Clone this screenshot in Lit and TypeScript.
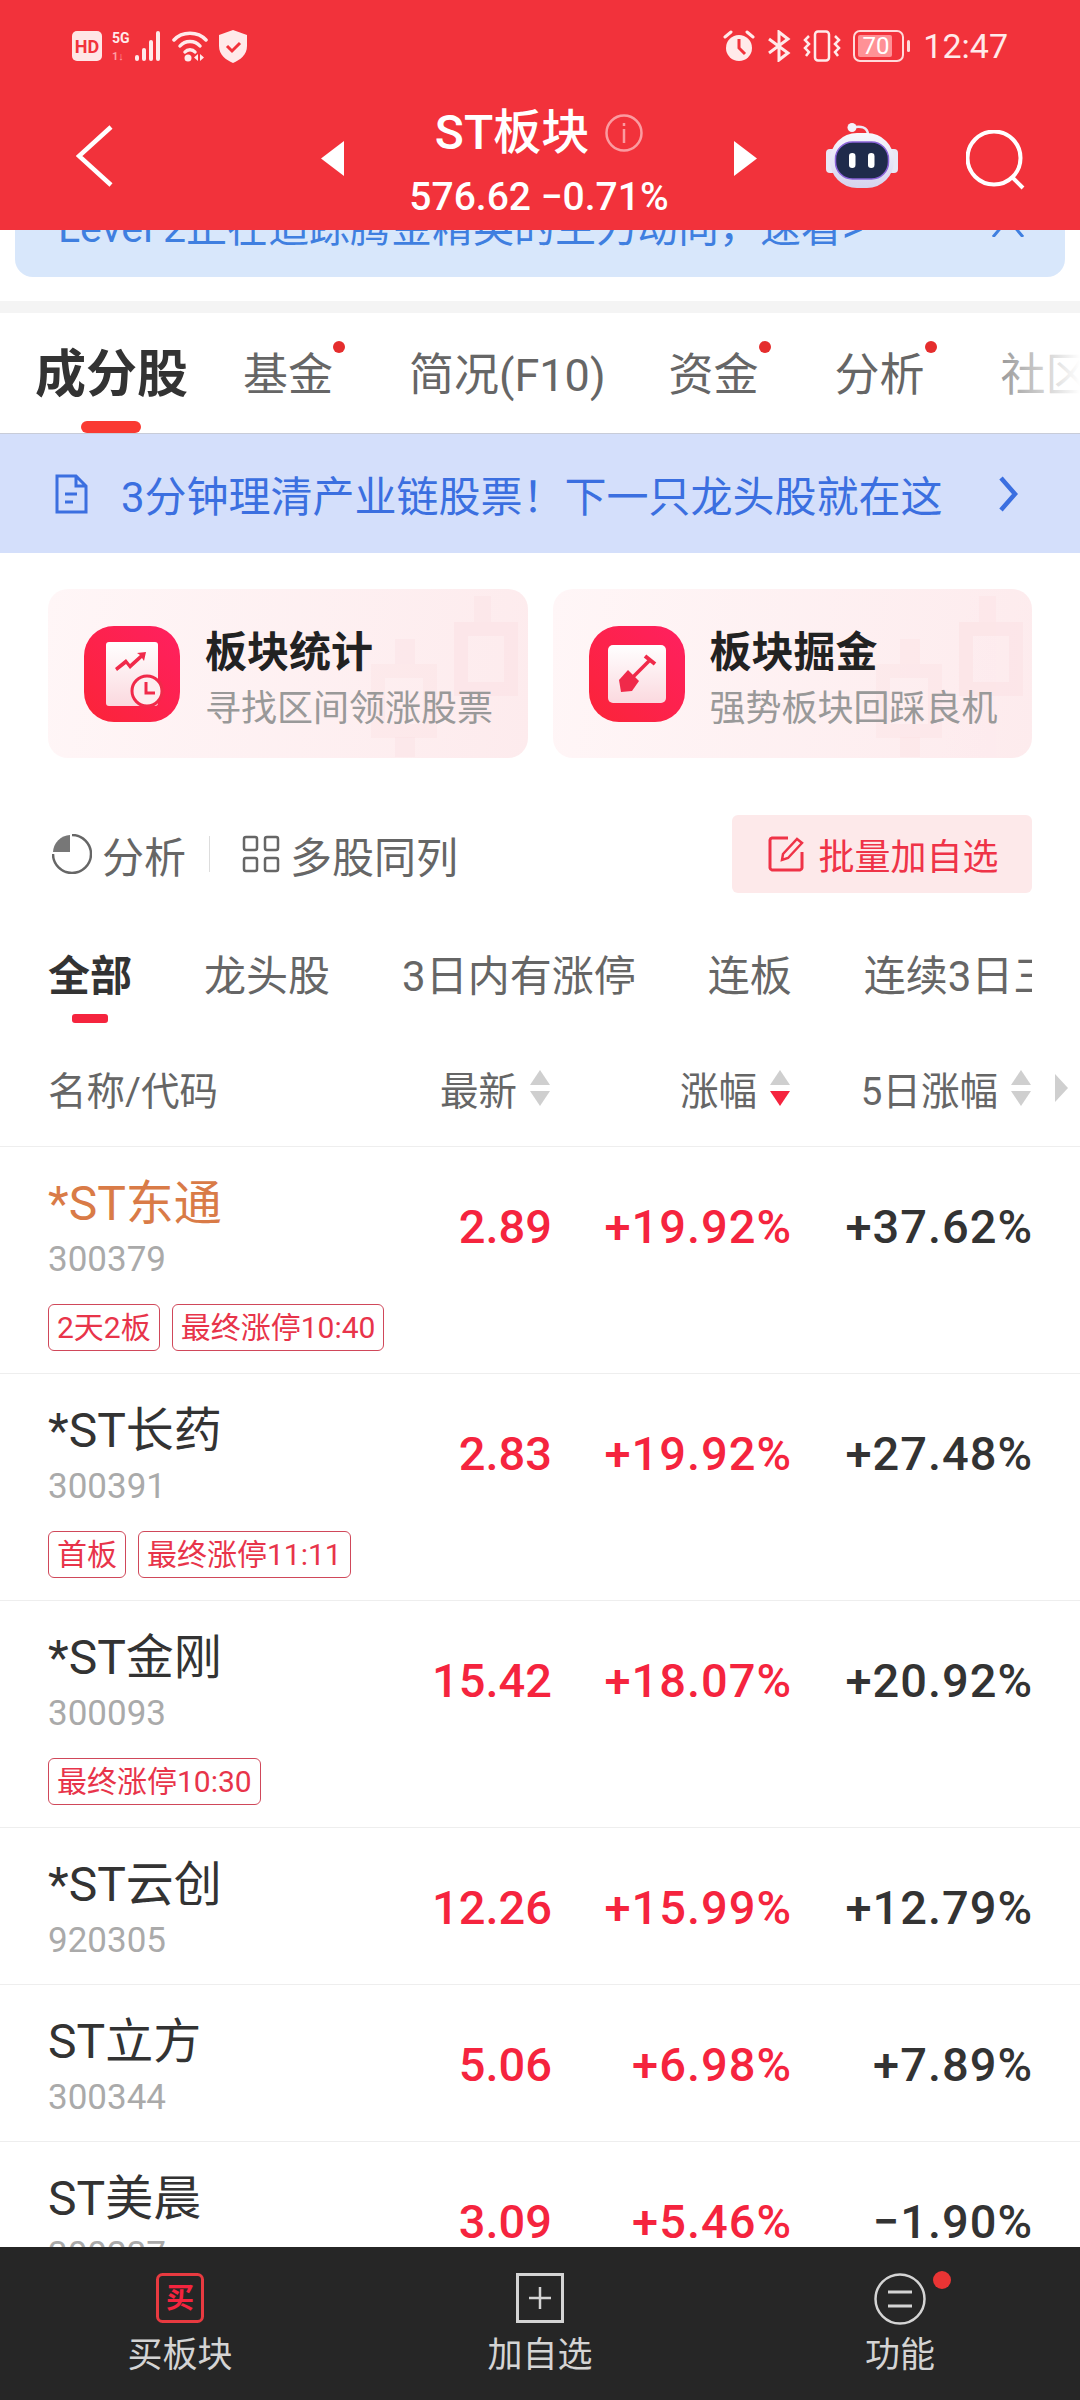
import { LitElement, css, html, svg } from "lit";
import { customElement } from "lit/decorators.js";
import { classMap } from "lit/directives/class-map.js";

interface Stock {
  name: string;
  code: string;
  last: string;
  pct: string;
  five: string;
  tags: string[];
  hot?: boolean;
}

const STOCKS: Stock[] = [
  { name: "*ST东通", code: "300379", last: "2.89", pct: "+19.92%", five: "+37.62%", tags: ["2天2板", "最终涨停10:40"], hot: true },
  { name: "*ST长药", code: "300391", last: "2.83", pct: "+19.92%", five: "+27.48%", tags: ["首板", "最终涨停11:11"] },
  { name: "*ST金刚", code: "300093", last: "15.42", pct: "+18.07%", five: "+20.92%", tags: ["最终涨停10:30"] },
  { name: "*ST云创", code: "920305", last: "12.26", pct: "+15.99%", five: "+12.79%", tags: [] },
  { name: "ST立方", code: "300344", last: "5.06", pct: "+6.98%", five: "+7.89%", tags: [] },
  { name: "ST美晨", code: "300237", last: "3.09", pct: "+5.46%", five: "−1.90%", tags: [] },
];

const sortArrows = (active = false) => html`
  <svg class="sort" width="22" height="36" viewBox="0 0 22 36">
    <path d="M11 0 L21 15 H1 Z" fill="#cfcfcf"></path>
    <path d="M1 21 H21 L11 36 Z" fill=${active ? "#f5243e" : "#cfcfcf"}></path>
  </svg>
`;

// 卡片背景里的淡色K线
const candles = svg`
  <g fill="none" stroke="#fbdfe3" opacity=".45">
    <rect x="413" y="40" width="50" height="60" stroke-width="14"></rect>
    <rect x="330" y="82" width="52" height="60" stroke-width="14" opacity=".7"></rect>
  </g>
  <g fill="#fbdfe3" opacity=".35">
    <rect x="426" y="7" width="17" height="26"></rect>
    <rect x="347" y="50" width="20" height="25"></rect>
    <rect x="347" y="148" width="20" height="20"></rect>
  </g>
`;

@customElement("app-root")
export class AppRoot extends LitElement {
  static styles = css`
    :host {
      display: flex;
      flex-direction: column;
      width: 1080px;
      height: 2400px;
      overflow: hidden;
      background: #fff;
      font-family: Roboto, "Noto Sans CJK SC", sans-serif;
      color: #333;
    }
    svg {
      display: block;
      flex: none;
    }

    /* 顶部红色区域 */
    .top {
      position: relative;
      height: 230px;
      flex: none;
      background: #f2323b;
      color: #fff;
    }
    .status {
      height: 92px;
      display: flex;
      align-items: center;
      padding: 0 72px;
      color: #ffeaea;
    }
    .status-left {
      display: flex;
      align-items: center;
      gap: 10px;
    }
    .status-right {
      display: flex;
      align-items: center;
      gap: 12px;
      margin-left: auto;
    }
    .time {
      font-size: 34px;
      line-height: 40px;
    }
    .nav {
      display: flex;
      align-items: flex-start;
      height: 138px;
    }
    .back {
      margin: 33px 0 0 76px;
    }
    .tri-left {
      margin: 49px 0 0 207px;
    }
    .tri-right {
      margin-top: 49px;
    }
    .robot {
      margin: 31px 0 0 69px;
    }
    .search {
      margin: 38px 0 0 68px;
    }
    .center {
      width: 390px;
      padding-top: 16px;
      display: flex;
      flex-direction: column;
      align-items: center;
    }
    .title-row {
      display: flex;
      align-items: center;
      gap: 16px;
      height: 50px;
    }
    .title {
      font-size: 48px;
      line-height: 50px;
      font-weight: 500;
    }
    .sub {
      font-size: 39px;
      line-height: 44px;
      font-weight: 500;
      margin-top: 17px;
      white-space: nowrap;
    }

    /* 被遮住一半的提示条 */
    .notice {
      height: 47px;
      flex: none;
      margin: 0 15px;
      padding: 0 40px 0 43px;
      box-sizing: border-box;
      display: flex;
      justify-content: space-between;
      background: #d8e7fb;
      border-radius: 0 0 18px 18px;
      overflow: hidden;
      color: #3f7fe0;
      font-size: 41px;
    }
    .notice-text {
      line-height: 50px;
      margin-top: -27px;
      white-space: nowrap;
    }
    .notice-x {
      margin-top: -17px;
    }
    .gap-band {
      height: 12px;
      flex: none;
      margin-top: 24px;
      background: #f4f4f4;
    }

    /* 一级标签 */
    .tabs {
      position: relative;
      height: 120px;
      flex: none;
      display: flex;
      align-items: flex-start;
      padding-left: 35px;
      overflow: hidden;
      white-space: nowrap;
    }
    .tab {
      position: relative;
      flex: none;
      margin-top: 37px;
      margin-right: 76px;
      font-size: 45px;
      line-height: 52px;
      color: #666;
    }
    .tab:nth-child(3) {
      margin-right: 63px;
    }
    .tab.on {
      margin-top: 32px;
      margin-right: 55px;
      font-size: 51px;
      line-height: 60px;
      font-weight: 700;
      color: #333;
    }
    .tab.on::after {
      content: "";
      position: absolute;
      left: 46px;
      top: 76px;
      width: 60px;
      height: 12px;
      border-radius: 6px;
      background: #fa3a32;
    }
    .dot {
      position: absolute;
      right: -12px;
      top: -9px;
      width: 12px;
      height: 12px;
      border-radius: 50%;
      background: #e52d2d;
    }
    .tabs-fade {
      position: absolute;
      right: 0;
      top: 0;
      bottom: 0;
      width: 90px;
      background: linear-gradient(to right, rgba(255, 255, 255, 0.25), #fff);
    }

    /* 蓝色横幅 */
    .banner {
      height: 120px;
      flex: none;
      display: flex;
      align-items: center;
      padding: 0 62px 0 55px;
      box-sizing: border-box;
      background: #d4dffb;
      border-top: 1px solid #c8ccd8;
      color: #3b6fe0;
      font-size: 42px;
      white-space: nowrap;
    }
    .banner-text {
      margin-left: 33px;
    }
    .banner svg:last-child {
      margin-left: auto;
    }

    /* 两张卡片 */
    .cards {
      flex: none;
      display: flex;
      gap: 25px;
      padding: 36px 48px 0;
    }
    .card {
      position: relative;
      flex: 1;
      height: 169px;
      display: flex;
      align-items: center;
      gap: 25px;
      padding-left: 36px;
      border-radius: 20px;
      overflow: hidden;
      background: linear-gradient(100deg, #fff6f7, #fdebed);
    }
    .card-bg {
      position: absolute;
      left: 0;
      top: 0;
    }
    .card-icon {
      position: relative;
    }
    .card-text {
      position: relative;
      padding-top: 12px;
    }
    .card-title {
      font-size: 42px;
      line-height: 52px;
      font-weight: 700;
      color: #222;
    }
    .card-sub {
      font-size: 36px;
      line-height: 48px;
      margin-top: 6px;
      color: #999;
      white-space: nowrap;
    }

    /* 工具行 */
    .tools {
      flex: none;
      display: flex;
      align-items: center;
      height: 78px;
      margin-top: 57px;
      padding: 0 48px 0 52px;
      font-size: 42px;
      color: #666;
    }
    .tools-label {
      margin-left: 10px;
    }
    .tools-sep {
      width: 1px;
      height: 36px;
      margin: 0 32px 0 23px;
      background: #ddd;
    }
    .batch {
      margin-left: auto;
      width: 300px;
      height: 78px;
      box-sizing: border-box;
      padding-left: 3px;
      display: flex;
      align-items: center;
      justify-content: center;
      gap: 14px;
      border-radius: 6px;
      background: #fde9ea;
      color: #ef3347;
      font-size: 36px;
    }

    /* 二级标签 */
    .subtabs {
      position: relative;
      flex: none;
      display: flex;
      gap: 72px;
      height: 82px;
      margin: 54px 48px 0;
      overflow: hidden;
      white-space: nowrap;
      font-size: 42px;
      line-height: 60px;
      color: #666;
    }
    .subtab {
      flex: none;
      position: relative;
      height: 82px;
    }
    .subtab.on {
      font-weight: 700;
      color: #333;
    }
    .subtab.on::after {
      content: "";
      position: absolute;
      left: 24px;
      top: 67px;
      width: 36px;
      height: 9px;
      border-radius: 3px;
      background: #f5243e;
    }

    /* 行情列表 */
    .list-head,
    .row-main {
      display: grid;
      grid-template-columns: 282px 221px 240px 241px;
    }
    .list-head {
      position: relative;
      flex: none;
      height: 117px;
      padding: 0 48px;
      align-items: center;
      border-bottom: 1px solid #eee;
      font-size: 38.5px;
      color: #666;
    }
    .head-cell {
      display: flex;
      align-items: center;
      justify-content: flex-end;
      gap: 12px;
      white-space: nowrap;
    }
    .head-cell.first {
      justify-content: flex-start;
    }
    .more {
      position: absolute;
      right: 12px;
      top: 45px;
    }
    .list {
      flex: 1;
      min-height: 0;
      overflow: hidden;
    }
    .row {
      padding: 0 48px;
      border-bottom: 1px solid #eee;
    }
    .name-cell {
      padding-top: 27px;
    }
    .name {
      font-size: 48px;
      line-height: 60px;
      color: #333;
      white-space: nowrap;
    }
    .name.hot {
      color: #d97b47;
    }
    .code {
      font-size: 35px;
      line-height: 44px;
      margin-top: 4px;
      color: #aaa;
    }
    .num {
      margin-top: 50px;
      margin-right: -1px;
      text-align: right;
      font-size: 47px;
      line-height: 60px;
      font-weight: 500;
      color: #f5243e;
      white-space: nowrap;
    }
    .num.pct {
      letter-spacing: 1px;
    }
    .num.plain {
      color: #333;
    }
    .row-tags {
      display: flex;
      gap: 12px;
      padding: 0 0 22px;
      margin-top: 22px;
    }
    .row-main {
      padding-bottom: 21px;
    }
    .row.has-tags .row-main {
      padding-bottom: 0;
    }
    .tag {
      height: 45px;
      line-height: 45px;
      padding: 0 8px;
      border: 1px solid #d0485a;
      border-radius: 6px;
      font-size: 30px;
      color: #e8344a;
      white-space: nowrap;
    }

    /* 底部操作栏 */
    .bottom {
      flex: none;
      height: 153px;
      display: grid;
      grid-template-columns: repeat(3, 360px);
      background: #262626;
      color: #d4d4d4;
      font-size: 35px;
    }
    .action {
      position: relative;
      display: flex;
      flex-direction: column;
      align-items: center;
      padding-top: 26px;
    }
    .action-label {
      line-height: 46px;
      margin-top: 10px;
    }
    .action:last-child .action-label {
      margin-top: 8px;
    }
    .action-dot {
      position: absolute;
      left: 213px;
      top: 24px;
      width: 18px;
      height: 18px;
      border-radius: 50%;
      background: #e93434;
    }
  `;

  private statusLeft() {
    return html`
      <div class="status-left">
        <svg width="30" height="30" viewBox="0 0 30 30">
          <rect width="30" height="30" rx="5" fill="#ffe6e6"></rect>
          <text x="15" y="22" text-anchor="middle" font-size="18" font-weight="700" font-family="Roboto" fill="#f2323b">HD</text>
        </svg>
        <svg width="50" height="32" viewBox="0 0 50 32">
          <text x="0" y="13" font-size="14" font-weight="700" font-family="Roboto" fill="#ffeaea">5G</text>
          <text x="0" y="30" font-size="11" font-weight="700" font-family="Roboto" fill="#ff9ea3">1↓</text>
          <g fill="#ffeaea">
            <rect x="23" y="25" width="4" height="6" rx="2"></rect>
            <rect x="30" y="18" width="4" height="13" rx="2"></rect>
            <rect x="37" y="10" width="4" height="21" rx="2"></rect>
            <rect x="44" y="1" width="4" height="30" rx="2"></rect>
          </g>
        </svg>
        <svg width="36" height="32" viewBox="0 0 36 32">
          <g fill="none" stroke="#ffeaea" stroke-width="3.5" stroke-linecap="round">
            <path d="M2 10 C10 1 26 1 34 10"></path>
            <path d="M8 16 C13 10 23 10 28 16"></path>
            <path d="M13 22 C15.500 19 20.500 19 23 22"></path>
          </g>
          <circle cx="16" cy="28" r="3.500" fill="#ffeaea"></circle>
          <path d="M26 24 V31 L22 27.500 Z M28 24 V31 L32 27.500 Z" fill="#ffeaea"></path>
        </svg>
        <svg width="30" height="33" viewBox="0 0 30 33">
          <path d="M15 0 L29 5 V16 C29 25 22 30 15 33 C8 30 1 25 1 16 V5 Z" fill="#ffeaea"></path>
          <path d="M9 16 L14 21 L22 13" fill="none" stroke="#f2323b" stroke-width="3"></path>
        </svg>
      </div>
    `;
  }

  private statusRight() {
    return html`
      <div class="status-right">
        <svg width="32" height="32" viewBox="0 0 32 32">
          <circle cx="16" cy="18" r="13" fill="#ffeaea"></circle>
          <path d="M16 9 V18 L22 24" fill="none" stroke="#f2323b" stroke-width="3"></path>
          <path d="M2 7 L8 2 M30 7 L24 2" stroke="#ffeaea" stroke-width="3" stroke-linecap="round"></path>
        </svg>
        <svg width="24" height="32" viewBox="0 0 24 32">
          <path d="M2 9 L21 23 L12 30 V2 L21 9 L2 23" fill="none" stroke="#ffeaea" stroke-width="3"></path>
        </svg>
        <svg width="38" height="32" viewBox="0 0 38 32">
          <rect x="12" y="1.500" width="14" height="29" rx="3" fill="none" stroke="#ffeaea" stroke-width="2.500"></rect>
          <path d="M6 6 L2 10 L6 14 L2 18 L6 22 L3 26 M32 6 L36 10 L32 14 L36 18 L32 22 L35 26" fill="none" stroke="#ffeaea" stroke-width="2.500"></path>
        </svg>
        <svg width="58" height="32" viewBox="0 0 58 32">
          <rect x="1" y="1" width="49" height="30" rx="6" fill="none" stroke="#ffdada" stroke-width="2"></rect>
          <rect x="5" y="5" width="34" height="22" rx="2" fill="#ff9196"></rect>
          <rect x="54" y="10" width="3" height="12" rx="1.500" fill="#ffdada"></rect>
          <text x="23" y="24" text-anchor="middle" font-size="24" font-family="Roboto" fill="#fff">70</text>
        </svg>
        <span class="time">12:47</span>
      </div>
    `;
  }

  private robot() {
    return html`
      <svg class="robot" width="72" height="65" viewBox="0 0 72 65">
        <defs>
          <linearGradient id="shell" x1="0" y1="0" x2="0" y2="1">
            <stop offset="0" stop-color="#f8f8fd"></stop>
            <stop offset="1" stop-color="#d5d3ee"></stop>
          </linearGradient>
        </defs>
        <path d="M26 5 C34 2 42 4 42 12" fill="none" stroke="#ece9f6" stroke-width="2.500"></path>
        <circle cx="26" cy="4.500" r="4.500" fill="#f4f2fb"></circle>
        <rect x="0" y="26" width="10" height="24" rx="4" fill="#e9e7f5"></rect>
        <rect x="62" y="26" width="10" height="24" rx="4" fill="#e9e7f5"></rect>
        <rect x="4" y="10" width="64" height="55" rx="27" fill="url(#shell)"></rect>
        <rect x="9.500" y="19" width="53" height="37" rx="17" fill="#1f2b4b" stroke="#8a63d8" stroke-width="1.500"></rect>
        <rect x="23" y="30" width="6.500" height="15" rx="3.200" fill="#fff"></rect>
        <rect x="42" y="30" width="6.500" height="15" rx="3.200" fill="#fff"></rect>
      </svg>
    `;
  }

  private statIcon() {
    return html`
      <svg class="card-icon" width="96" height="96" viewBox="0 0 96 96">
        <defs>
          <linearGradient id="redA" x1="1" y1="0" x2="0" y2="1">
            <stop offset="0" stop-color="#ff2060"></stop>
            <stop offset="1" stop-color="#fb2438"></stop>
          </linearGradient>
          <linearGradient id="paperA" x1="0" y1="0" x2="0" y2="1">
            <stop offset="0" stop-color="#ffffff"></stop>
            <stop offset="1" stop-color="#fbd9df"></stop>
          </linearGradient>
        </defs>
        <rect width="96" height="96" rx="30" fill="url(#redA)"></rect>
        <rect x="22" y="16" width="52" height="64" rx="3" fill="url(#paperA)"></rect>
        <path d="M31 42 L42 33 L46 38 L56 29 L53 27 L62 26 L60 35 L58 32 L46 43 L42 38 L33 45 Z" fill="#f02a4a"></path>
        <circle cx="63" cy="65" r="15" fill="#fdeef0" stroke="#f02a4a" stroke-width="3"></circle>
        <path d="M62 56 V67 H71" fill="none" stroke="#f02a4a" stroke-width="3"></path>
      </svg>
    `;
  }

  private shovelIcon() {
    return html`
      <svg class="card-icon" width="96" height="96" viewBox="0 0 96 96">
        <defs>
          <linearGradient id="redB" x1="1" y1="0" x2="0" y2="1">
            <stop offset="0" stop-color="#ff2060"></stop>
            <stop offset="1" stop-color="#fb2438"></stop>
          </linearGradient>
          <linearGradient id="paperB" x1="0" y1="0" x2="0" y2="1">
            <stop offset="0" stop-color="#ffffff"></stop>
            <stop offset="1" stop-color="#fbd9df"></stop>
          </linearGradient>
        </defs>
        <rect width="96" height="96" rx="30" fill="url(#redB)"></rect>
        <rect x="19" y="19" width="58" height="58" rx="5" fill="url(#paperB)"></rect>
        <path d="M56 30 L66 38" fill="none" stroke="#f02a4a" stroke-width="4"></path>
        <path d="M60 35 L43 52" fill="none" stroke="#f02a4a" stroke-width="3.500"></path>
        <path d="M39 44 L50 55 L43 65 L32 66 L30 54 Z" fill="#f02a4a"></path>
      </svg>
    `;
  }

  private row(stock: Stock) {
    const tagged = stock.tags.length > 0;
    return html`
      <div class=${classMap({ row: true, "has-tags": tagged })}>
        <div class="row-main">
          <div class="name-cell">
            <div class=${classMap({ name: true, hot: !!stock.hot })}>${stock.name}</div>
            <div class="code">${stock.code}</div>
          </div>
          <div class="num">${stock.last}</div>
          <div class="num pct">${stock.pct}</div>
          <div class="num pct plain">${stock.five}</div>
        </div>
        ${tagged
          ? html`<div class="row-tags">${stock.tags.map((t) => html`<span class="tag">${t}</span>`)}</div>`
          : null}
      </div>
    `;
  }

  render() {
    return html`
      <header class="top">
        <div class="status">${this.statusLeft()}${this.statusRight()}</div>
        <div class="nav">
          <svg class="back" width="38" height="62" viewBox="0 0 38 62">
            <path d="M35 2 L3 31 L35 60" fill="none" stroke="#fff" stroke-width="4.500"></path>
          </svg>
          <svg class="tri-left" width="23" height="35" viewBox="0 0 23 35"><path d="M23 0 V35 L0 17.500 Z" fill="#fff"></path></svg>
          <div class="center">
            <div class="title-row">
              <span class="title">ST板块</span>
              <svg width="38" height="38" viewBox="0 0 38 38">
                <circle cx="19" cy="19" r="17.500" fill="none" stroke="#fb9ba0" stroke-width="2.500"></circle>
                <path d="M19 15 V29 M19 9 V12" stroke="#fb9ba0" stroke-width="2.500"></path>
              </svg>
            </div>
            <div class="sub">576.62 −0.71%</div>
          </div>
          <svg class="tri-right" width="23" height="35" viewBox="0 0 23 35"><path d="M0 0 V35 L23 17.500 Z" fill="#fff"></path></svg>
          ${this.robot()}
          <svg class="search" width="60" height="60" viewBox="0 0 60 60">
            <circle cx="28" cy="28" r="26.500" fill="none" stroke="#fff" stroke-width="4"></circle>
            <path d="M46 47 L57 58" stroke="#fff" stroke-width="4"></path>
          </svg>
        </div>
      </header>

      <div class="notice">
        <span class="notice-text">Level 2正在追踪腾金精英的主力动向，速看&gt;</span>
        <svg class="notice-x" width="34" height="24" viewBox="0 0 34 24"><path d="M2 24 L17 6 L32 24" fill="none" stroke="#3f7fe0" stroke-width="3"></path></svg>
      </div>
      <div class="gap-band"></div>

      <nav class="tabs">
        <div class="tab on">成分股</div>
        <div class="tab">基金<i class="dot"></i></div>
        <div class="tab">简况(F10)</div>
        <div class="tab">资金<i class="dot"></i></div>
        <div class="tab">分析<i class="dot"></i></div>
        <div class="tab">社区</div>
        <div class="tabs-fade"></div>
      </nav>

      <div class="banner">
        <svg width="33" height="40" viewBox="0 0 33 40">
          <path d="M2 2 H21 L31 12 V38 H2 Z M21 2 V12 H31 M10 20 H22 M10 28 H18" fill="none" stroke="#3b6fe0" stroke-width="3"></path>
        </svg>
        <span class="banner-text">3分钟理清产业链股票！下一只龙头股就在这</span>
        <svg width="20" height="36" viewBox="0 0 20 36"><path d="M3 2 L17 18 L3 34" fill="none" stroke="#3b6fe0" stroke-width="4.500"></path></svg>
      </div>

      <section class="cards">
        <div class="card">
          <svg class="card-bg" width="480" height="169" viewBox="0 0 480 169">${candles}</svg>
          ${this.statIcon()}
          <div class="card-text">
            <div class="card-title">板块统计</div>
            <div class="card-sub">寻找区间领涨股票</div>
          </div>
        </div>
        <div class="card">
          <svg class="card-bg" width="480" height="169" viewBox="0 0 480 169">${candles}</svg>
          ${this.shovelIcon()}
          <div class="card-text">
            <div class="card-title">板块掘金</div>
            <div class="card-sub">强势板块回踩良机</div>
          </div>
        </div>
      </section>

      <div class="tools">
        <svg width="40" height="40" viewBox="0 0 40 40">
          <path d="M20 1 A19 19 0 1 1 1 20" fill="none" stroke="#666" stroke-width="2.500"></path>
          <path d="M18 1 V18 H1 A18 18 0 0 1 18 1 Z" fill="#777"></path>
        </svg>
        <span class="tools-label">分析</span>
        <span class="tools-sep"></span>
        <svg width="38" height="38" viewBox="0 0 38 38">
          <g fill="none" stroke="#666" stroke-width="2.500">
            <rect x="2" y="2" width="13" height="13" rx="2"></rect>
            <rect x="23" y="2" width="13" height="13" rx="2"></rect>
            <rect x="2" y="23" width="13" height="13" rx="2"></rect>
            <rect x="23" y="23" width="13" height="13" rx="2"></rect>
          </g>
        </svg>
        <span class="tools-label">多股同列</span>
        <div class="batch">
          <svg width="36" height="36" viewBox="0 0 36 36">
            <path d="M20 2 H4 A2.500 2.500 0 0 0 2 4 V32 A2.500 2.500 0 0 0 4 34 H32 A2.500 2.500 0 0 0 34 32 V16" fill="none" stroke="#ef3347" stroke-width="3"></path>
            <path d="M14 24 L15 18 L29 3 L34 7 L20 22 Z" fill="none" stroke="#ef3347" stroke-width="2.500"></path>
          </svg>
          <span>批量加自选</span>
        </div>
      </div>

      <div class="subtabs">
        <div class="subtab on">全部</div>
        <div class="subtab">龙头股</div>
        <div class="subtab">3日内有涨停</div>
        <div class="subtab">连板</div>
        <div class="subtab">连续3日三连板</div>
      </div>

      <div class="list-head">
        <div class="head-cell first">名称/代码</div>
        <div class="head-cell">最新${sortArrows()}</div>
        <div class="head-cell">涨幅${sortArrows(true)}</div>
        <div class="head-cell">5日涨幅${sortArrows()}</div>
        <svg class="more" width="13" height="28" viewBox="0 0 13 28"><path d="M0 0 L13 14 L0 28 Z" fill="#cfcfcf"></path></svg>
      </div>

      <div class="list">${STOCKS.map((s) => this.row(s))}</div>

      <footer class="bottom">
        <div class="action">
          <svg width="48" height="50" viewBox="0 0 48 50">
            <rect x="1.500" y="1.500" width="45" height="47" rx="5" fill="none" stroke="#e83a40" stroke-width="3"></rect>
            <text x="24" y="35" text-anchor="middle" font-size="28" font-weight="700" font-family="Noto Sans CJK SC" fill="#f5243e">买</text>
          </svg>
          <span class="action-label">买板块</span>
        </div>
        <div class="action">
          <svg width="48" height="50" viewBox="0 0 48 50">
            <rect x="1.500" y="1.500" width="45" height="47" fill="none" stroke="#d4d4d4" stroke-width="3"></rect>
            <path d="M24 14 V36 M13 25 H35" stroke="#d4d4d4" stroke-width="2.500"></path>
          </svg>
          <span class="action-label">加自选</span>
        </div>
        <div class="action">
          <svg width="52" height="52" viewBox="0 0 52 52">
            <circle cx="26" cy="26" r="24.500" fill="none" stroke="#d4d4d4" stroke-width="2.500"></circle>
            <path d="M14 19 H38 M14 33 H38" stroke="#d4d4d4" stroke-width="3"></path>
          </svg>
          <span class="action-label">功能</span>
          <i class="action-dot"></i>
        </div>
      </footer>
    `;
  }
}
